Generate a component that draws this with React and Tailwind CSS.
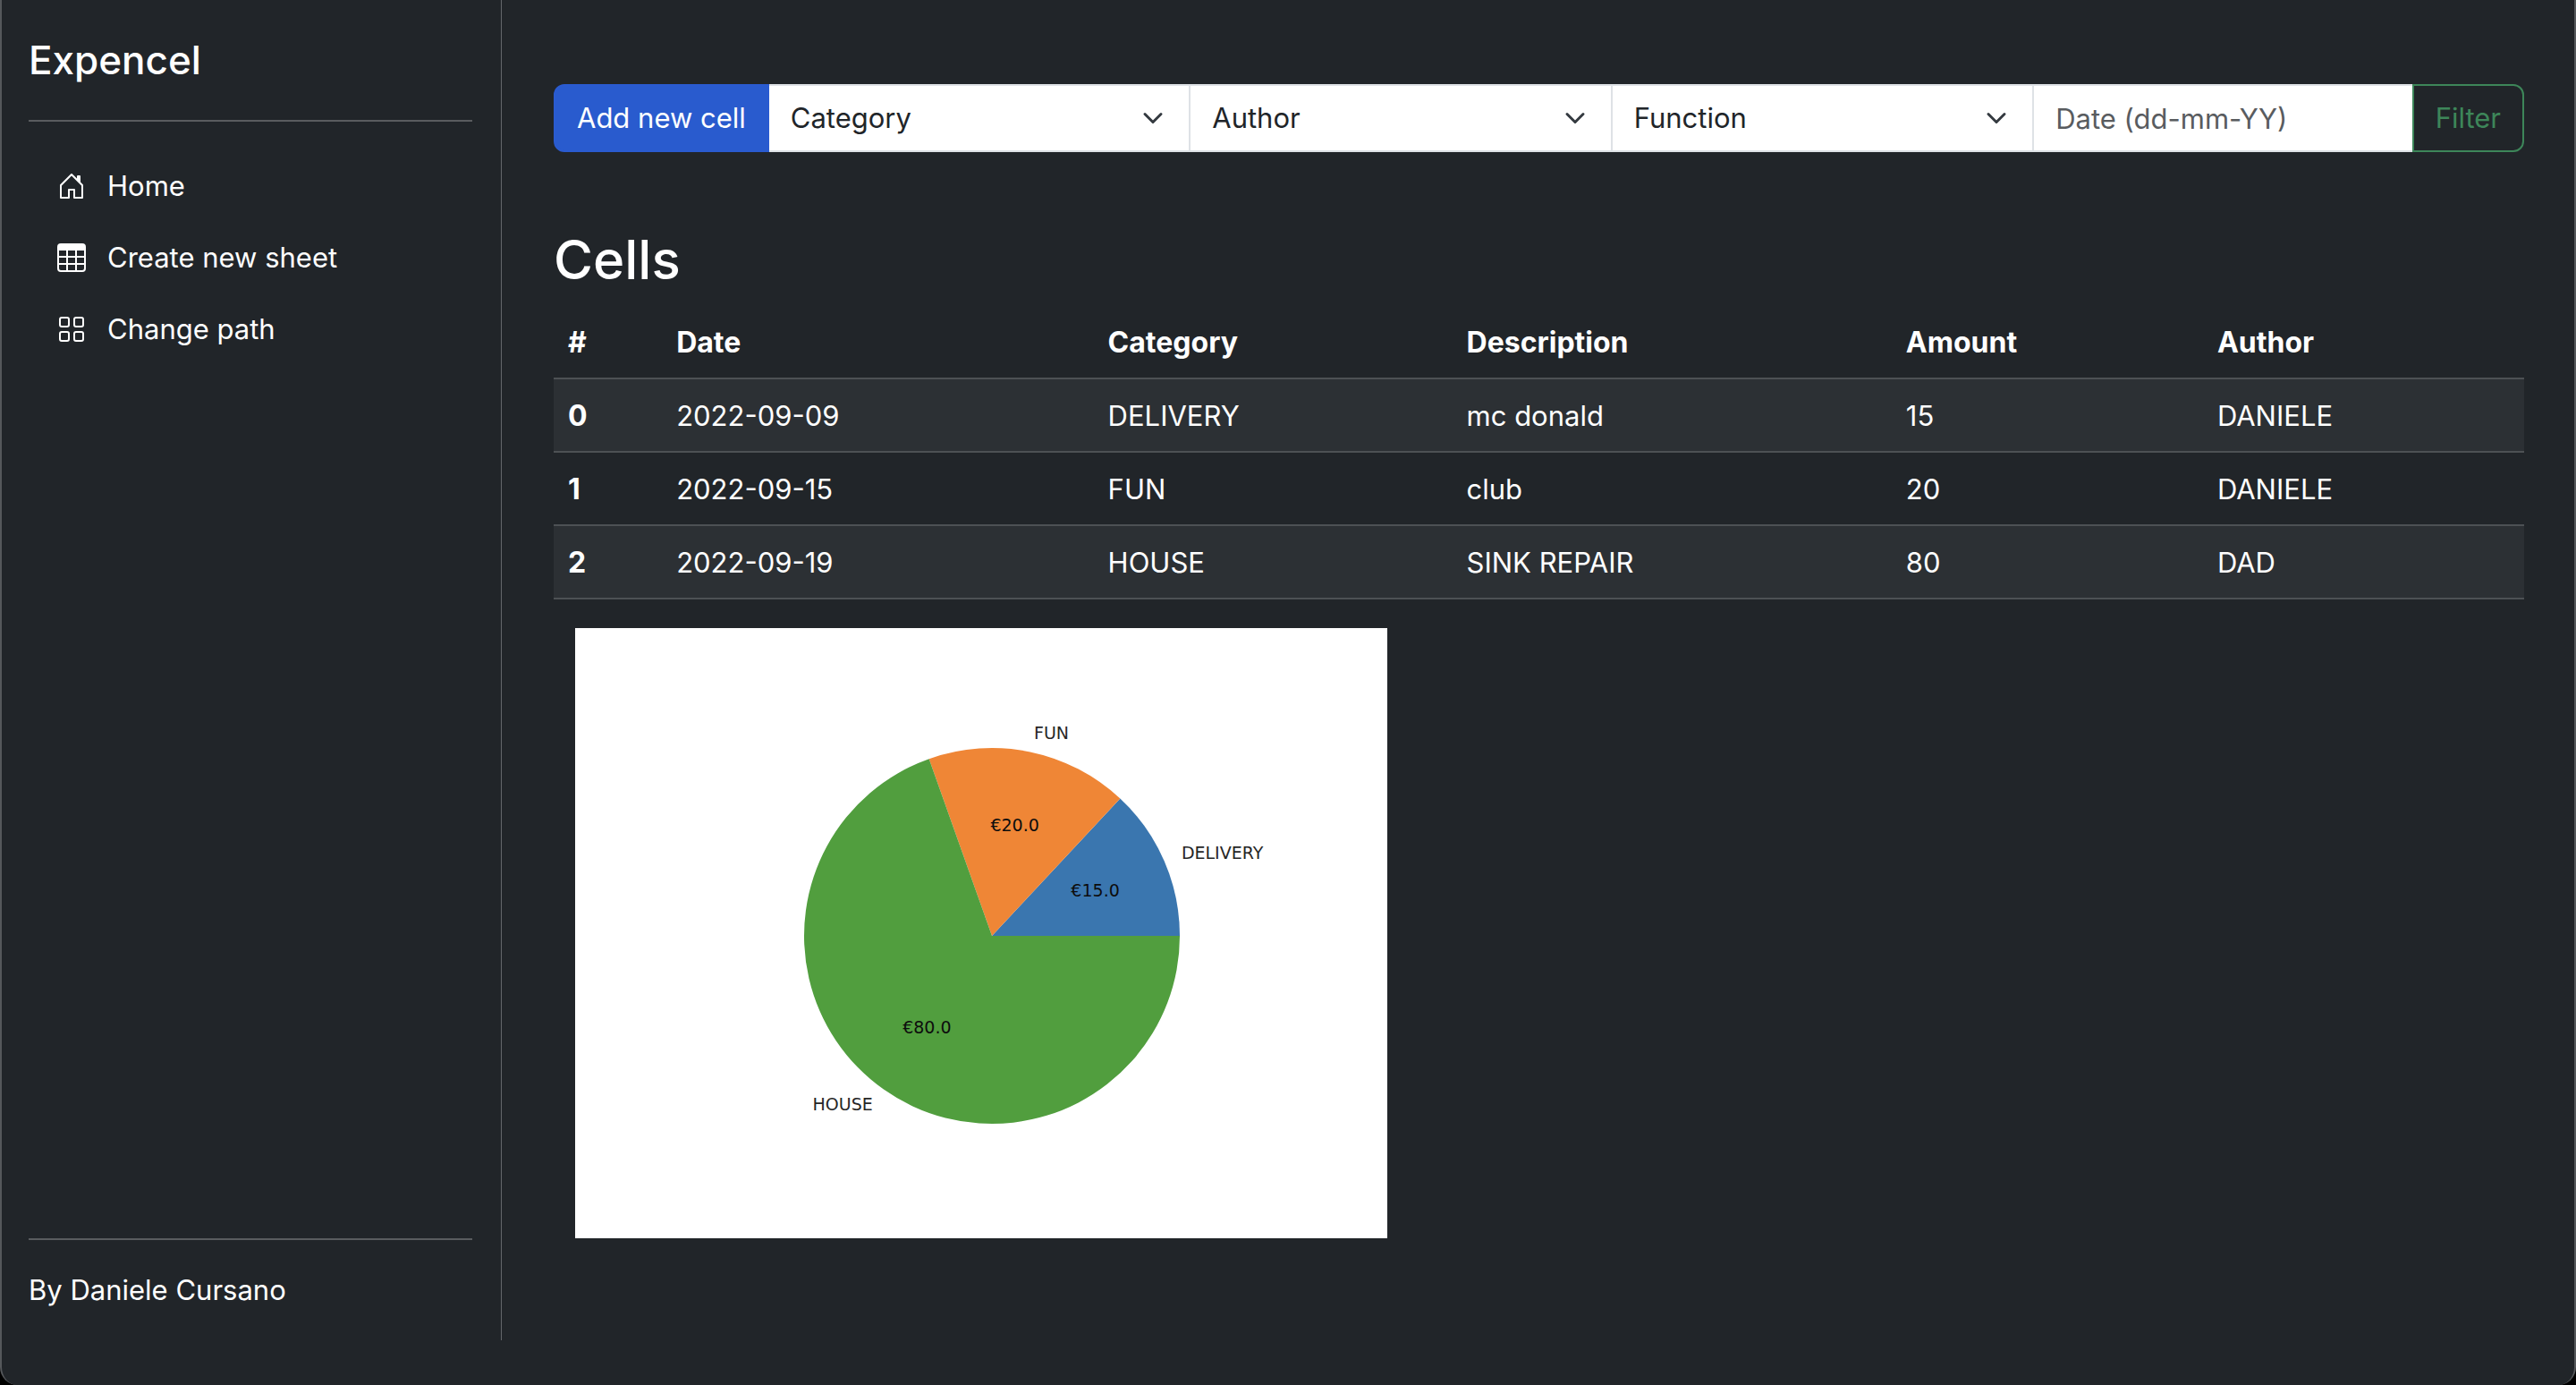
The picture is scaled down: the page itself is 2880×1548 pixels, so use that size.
const LINKS = [
  {
    label: "Home",
    path: "M8.354 1.146a.5.5 0 0 0-.708 0l-6 6A.5.5 0 0 0 1.5 7.5v7a.5.5 0 0 0 .5.5h4.5a.5.5 0 0 0 .5-.5v-4h2v4a.5.5 0 0 0 .5.5H14a.5.5 0 0 0 .5-.5v-7a.5.5 0 0 0-.146-.354L13 5.793V2.5a.5.5 0 0 0-.5-.5h-1a.5.5 0 0 0-.5.5v1.293L8.354 1.146zM2.5 14V7.707l5.5-5.5 5.5 5.5V14H10v-4a.5.5 0 0 0-.5-.5h-3a.5.5 0 0 0-.5.5v4H2.5z",
  },
  {
    label: "Create new sheet",
    path: "M0 2a2 2 0 0 1 2-2h12a2 2 0 0 1 2 2v12a2 2 0 0 1-2 2H2a2 2 0 0 1-2-2V2zm15 2h-4v3h4V4zm0 4h-4v3h4V8zm0 4h-4v3h3a1 1 0 0 0 1-1v-2zm-5 3v-3H6v3h4zm-5 0v-3H1v2a1 1 0 0 0 1 1h3zm-4-4h4V8H1v3zm0-4h4V4H1v3zm5-3v3h4V4H6zm4 4H6v3h4V8z",
  },
  {
    label: "Change path",
    path: "M1 2.5A1.5 1.5 0 0 1 2.5 1h3A1.5 1.5 0 0 1 7 2.5v3A1.5 1.5 0 0 1 5.5 7h-3A1.5 1.5 0 0 1 1 5.5v-3zM2.5 2a.5.5 0 0 0-.5.5v3a.5.5 0 0 0 .5.5h3a.5.5 0 0 0 .5-.5v-3a.5.5 0 0 0-.5-.5h-3zm6.5.5A1.5 1.5 0 0 1 10.5 1h3A1.5 1.5 0 0 1 15 2.5v3A1.5 1.5 0 0 1 13.5 7h-3A1.5 1.5 0 0 1 9 5.5v-3zm1.5-.5a.5.5 0 0 0-.5.5v3a.5.5 0 0 0 .5.5h3a.5.5 0 0 0 .5-.5v-3a.5.5 0 0 0-.5-.5h-3zM1 10.5A1.5 1.5 0 0 1 2.5 9h3A1.5 1.5 0 0 1 7 10.5v3A1.5 1.5 0 0 1 5.5 15h-3A1.5 1.5 0 0 1 1 13.5v-3zm1.5-.5a.5.5 0 0 0-.5.5v3a.5.5 0 0 0 .5.5h3a.5.5 0 0 0 .5-.5v-3a.5.5 0 0 0-.5-.5h-3zm6.5.5A1.5 1.5 0 0 1 10.5 9h3a1.5 1.5 0 0 1 1.5 1.5v3a1.5 1.5 0 0 1-1.5 1.5h-3A1.5 1.5 0 0 1 9 13.5v-3zm1.5-.5a.5.5 0 0 0-.5.5v3a.5.5 0 0 0 .5.5h3a.5.5 0 0 0 .5-.5v-3a.5.5 0 0 0-.5-.5h-3z",
  },
];

const ROWS = [
  ["0", "2022-09-09", "DELIVERY", "mc donald", "15", "DANIELE"],
  ["1", "2022-09-15", "FUN", "club", "20", "DANIELE"],
  ["2", "2022-09-19", "HOUSE", "SINK REPAIR", "80", "DAD"],
];

const HEADINGS = [
  ["#", "w-[5.5%]"],
  ["Date", "w-[21.9%]"],
  ["Category", "w-[18.2%]"],
  ["Description", "w-[22.3%]"],
  ["Amount", "w-[15.8%]"],
  ["Author", "w-[16.3%]"],
];

const SLICES = [
  { label: "DELIVERY", value: 15, color: "#3a76af" },
  { label: "FUN", value: 20, color: "#ef8636" },
  { label: "HOUSE", value: 80, color: "#519e3e" },
];

function Sidebar() {
  return (
    <aside className="flex w-[559px] shrink-0 flex-col border-r border-[#64676a] pt-8 pr-8 pb-8 pl-[30px]">
      <a href="#" className="text-[44px]/[70px] font-medium">Expencel</a>
      <hr className="mt-8 border-t-2 border-[#595c5f]" />
      <nav className="mt-8 mb-auto">
        <ul>
          {LINKS.map((link) => (
            <li key={link.label}>
              <a href="#" className="flex h-20 items-center gap-6 px-8">
                <svg viewBox="0 0 16 16" className="size-8" fill="currentColor" aria-hidden="true">
                  <path d={link.path} />
                </svg>
                {link.label}
              </a>
            </li>
          ))}
        </ul>
      </nav>
      <hr className="mb-8 border-t-2 border-[#595c5f]" />
      <p>By Daniele Cursano</p>
    </aside>
  );
}

function FilterSelect({ label }) {
  return (
    <div className="relative min-w-0 flex-[10] border-y-2 border-r-2 border-[#dee2e6] bg-white">
      <select aria-label={label} className="h-full w-full appearance-none bg-transparent pr-16 pl-6 text-[#212529] outline-none">
        <option>{label}</option>
      </select>
      <svg viewBox="0 0 16 16" className="pointer-events-none absolute inset-y-0 right-6 my-auto h-6 w-8" fill="none" aria-hidden="true">
        <path d="m2 5 6 6 6-6" stroke="#343a40" strokeWidth="2" strokeLinecap="round" strokeLinejoin="round" />
      </svg>
    </div>
  );
}

function PieChart() {
  const cx = 466;
  const cy = 344;
  const r = 210;
  const total = SLICES.reduce((sum, s) => sum + s.value, 0);
  const at = (angle, k) => [cx + r * k * Math.cos(angle), cy - r * k * Math.sin(angle)];
  let start = 0;
  return (
    <svg viewBox="0 0 908 682" className="mt-8 ml-6 w-[908px] max-w-full bg-white font-['DejaVu_Sans',sans-serif] text-[19px]" role="img" aria-label="Amount per category">
      {SLICES.map((s) => {
        const end = start + (s.value / total) * 2 * Math.PI;
        const mid = (start + end) / 2;
        const [x1, y1] = at(start, 1);
        const [x2, y2] = at(end, 1);
        const [lx, ly] = at(mid, 1.1);
        const [vx, vy] = at(mid, 0.6);
        const large = end - start > Math.PI ? 1 : 0;
        start = end;
        return (
          <g key={s.label}>
            <path d={`M${cx} ${cy}L${x1} ${y1}A${r} ${r} 0 ${large} 0 ${x2} ${y2}Z`} fill={s.color} />
            <text x={lx} y={ly + 6} textAnchor={lx > cx ? "start" : "end"} fill="#262626">{s.label}</text>
            <text x={vx} y={vy + 6} textAnchor="middle" fill="#0d0d0d">€{s.value.toFixed(1)}</text>
          </g>
        );
      })}
    </svg>
  );
}

export default function App() {
  return (
    <div className="min-h-screen bg-black font-['Inter',sans-serif] text-[31px]/[48px] text-white">
      <div className="flex min-h-screen rounded-b-[20px] border-x-2 border-[#55585b] bg-[#212529] pb-[50px]">
        <Sidebar />
        <main className="min-w-0 flex-1 pt-[94px] pr-14 pl-[58px]">
          <form className="flex h-[76px]" onSubmit={(e) => e.preventDefault()}>
            <button type="button" className="rounded-l-xl border-2 border-[#2a5bd0] bg-[#295bce] px-6">Add new cell</button>
            <FilterSelect label="Category" />
            <FilterSelect label="Author" />
            <FilterSelect label="Function" />
            <div className="min-w-0 flex-[9] border-y-2 border-[#dee2e6] bg-white">
              <input aria-label="Date" placeholder="Date (dd-mm-YY)" className="h-full w-full px-6 text-[#212529] outline-none placeholder:text-[#595c5f]" />
            </div>
            <button type="submit" className="rounded-r-xl border-2 border-[#3d8659] px-6 text-[#3d8659]">Filter</button>
          </form>
          <h2 className="mt-[84px] mb-4 text-[60px]/[72px] font-medium">Cells</h2>
          <table className="w-full table-fixed text-left">
            <thead>
              <tr className="border-b-2 border-[#4d5154]">
                {HEADINGS.map(([h, w]) => (
                  <th key={h} scope="col" className={`${w} px-4 pt-[17px] pb-[15px] text-[32px]/[48px] font-bold`}>{h}</th>
                ))}
              </tr>
            </thead>
            <tbody>
              {ROWS.map(([id, ...cells]) => (
                <tr key={id} className="border-b-2 border-[#4d5154] odd:bg-[#2c3034]">
                  <th scope="row" className="px-4 pt-[17px] pb-[15px] text-[32px]/[48px] font-bold">{id}</th>
                  {cells.map((c, i) => (
                    <td key={i} className="px-4 pt-[17px] pb-[15px]">{c}</td>
                  ))}
                </tr>
              ))}
            </tbody>
          </table>
          <PieChart />
        </main>
      </div>
    </div>
  );
}
